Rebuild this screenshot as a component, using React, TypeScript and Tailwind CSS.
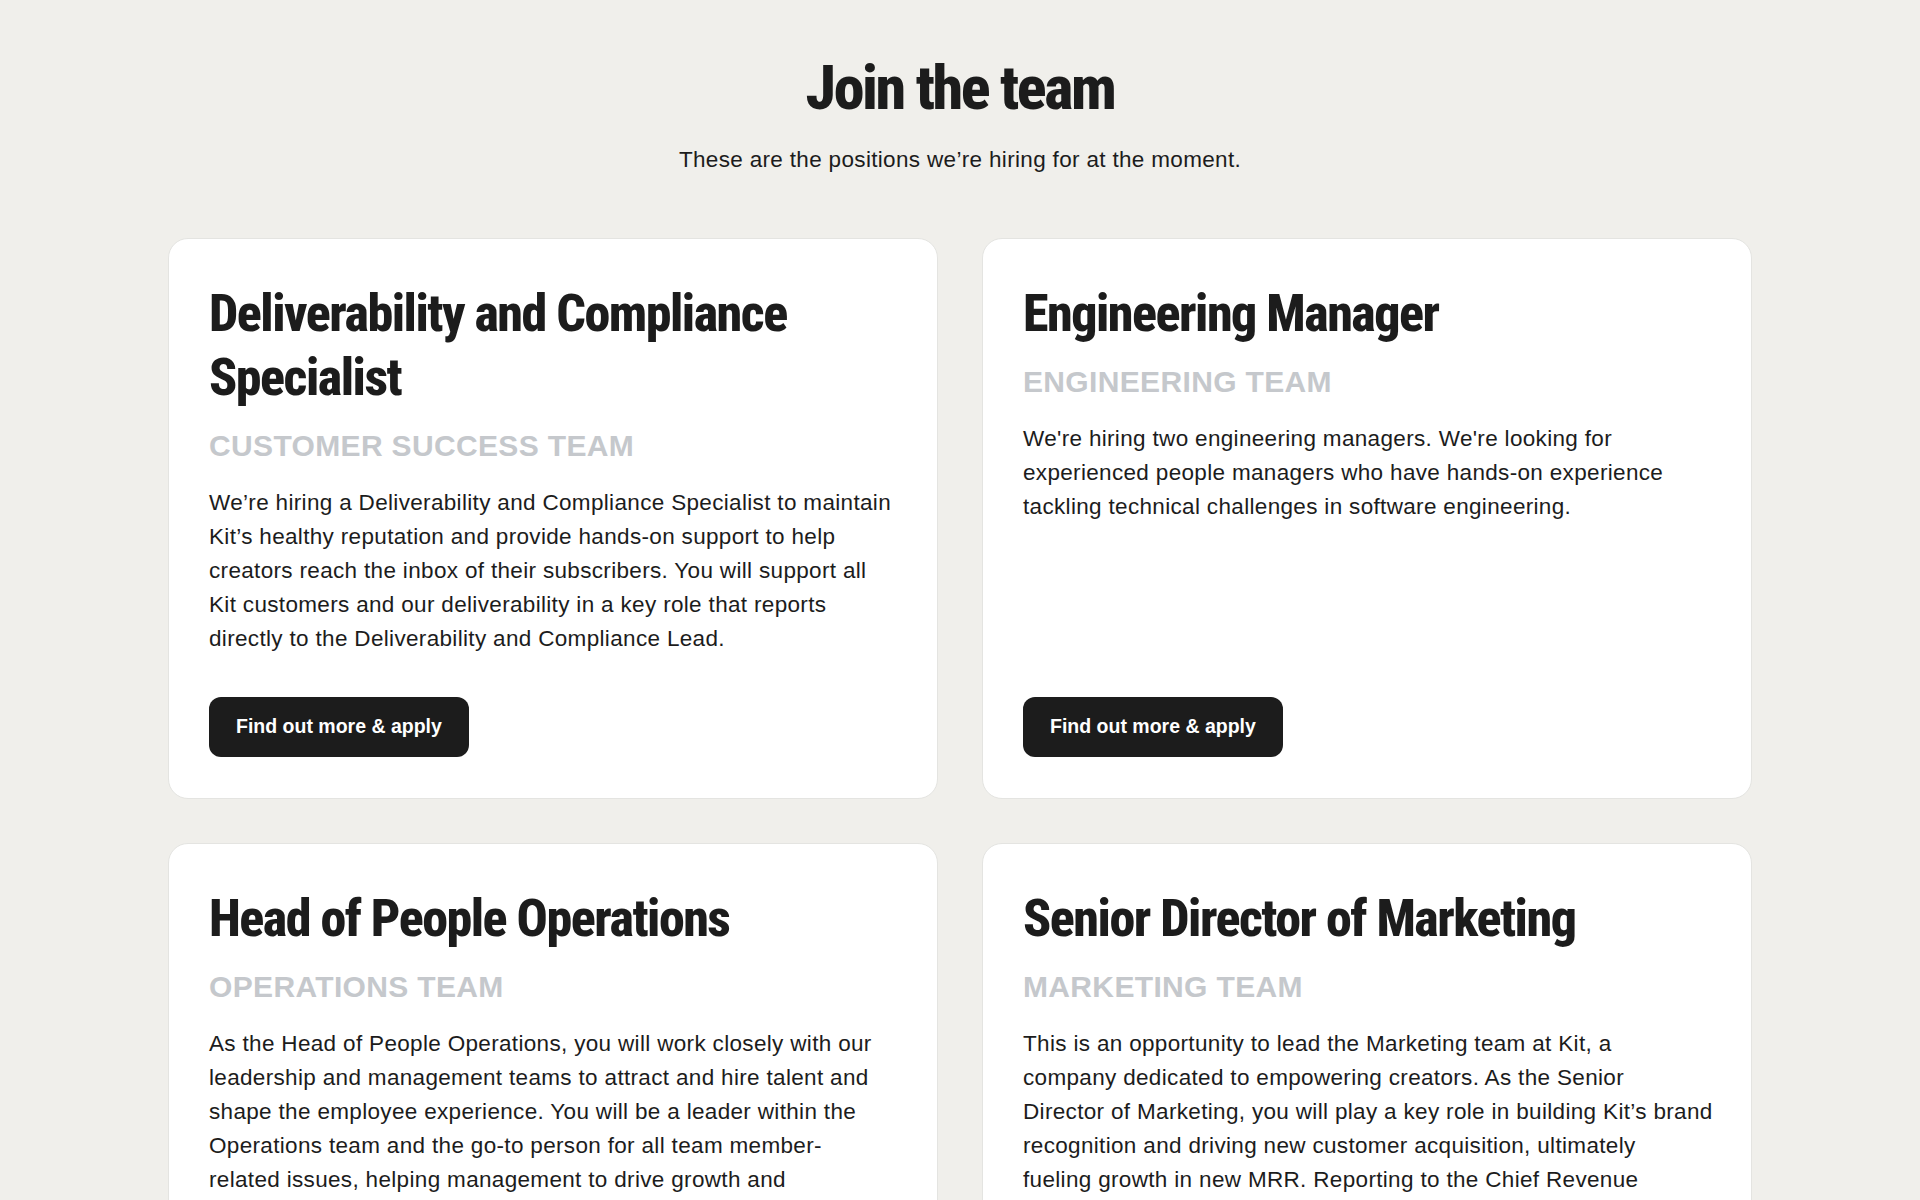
const jobs = [
  {
    title: 'Deliverability and Compliance Specialist',
    team: 'Customer Success Team',
    body: 'We’re hiring a Deliverability and Compliance Specialist to maintain Kit’s healthy reputation and provide hands-on support to help creators reach the inbox of their subscribers. You will support all Kit customers and our deliverability in a key role that reports directly to the Deliverability and Compliance Lead.',
  },
  {
    title: 'Engineering Manager',
    team: 'Engineering Team',
    body: "We're hiring two engineering managers. We're looking for experienced people managers who have hands-on experience tackling technical challenges in software engineering.",
  },
  {
    title: 'Head of People Operations',
    team: 'Operations Team',
    body: 'As the Head of People Operations, you will work closely with our leadership and management teams to attract and hire talent and shape the employee experience. You will be a leader within the Operations team and the go-to person for all team member-\nrelated issues, helping management to drive growth and\nsuccess across the whole company.',
  },
  {
    title: 'Senior Director of Marketing',
    team: 'Marketing Team',
    body: 'This is an opportunity to lead the Marketing team at Kit, a\ncompany dedicated to empowering creators. As the Senior\nDirector of Marketing, you will play a key role in building Kit’s brand\nrecognition and driving new customer acquisition, ultimately\nfueling growth in new MRR. Reporting to the Chief Revenue\nOfficer, you will shape our marketing strategy.',
  },
];

// condensed grotesque for headings: Roboto on its width axis
const display = "font-['Roboto',sans-serif] [font-stretch:75%] font-[800]";
const text = "font-['Liberation_Sans',sans-serif]";

function JobCard({ job }: { job: (typeof jobs)[number] }) {
  return (
    <div className="flex flex-col bg-white border border-[#e4e4e1] rounded-[20px] pl-[40px] pr-[37px] pt-[43px] pb-[41px]">
      <h2 className={`${display} text-[52px] leading-[64px] tracking-[-1.5px] text-[#1c1c1c]`}>
        {job.title}
      </h2>
      <p className={`mt-[16px] ${text} font-bold uppercase text-[30px] leading-[40px] tracking-[0.35px] text-[#c5c8cc]`}>
        {job.team}
      </p>
      <p className={`mt-[20px] ${text} whitespace-pre-line text-[22.5px] leading-[34px] tracking-[0.33px] text-[#1c1c1c]`}>
        {job.body}
      </p>
      <div className="mt-auto pt-[41px]">
        <button className={`h-[60px] px-[27px] rounded-[12px] bg-[#1c1c1c] text-white ${text} font-bold text-[19.5px]`}>
          Find out more &amp; apply
        </button>
      </div>
    </div>
  );
}

export default function App() {
  return (
    <div className="min-h-screen bg-[#f0efeb] pt-[54px] pb-[60px]">
      <div className="text-center">
        <h1 className={`${display} text-[62px] leading-[68px] tracking-[-2.4px] text-[#1c1c1c]`}>
          Join the team
        </h1>
        <p className={`mt-[22px] ${text} text-[22.5px] leading-[32px] tracking-[0.33px] text-[#1c1c1c]`}>
          These are the positions we’re hiring for at the moment.
        </p>
      </div>
      <div className="mx-auto mt-[62px] w-[1584px] grid grid-cols-2 gap-[44px]">
        {jobs.map((job) => (
          <JobCard key={job.title} job={job} />
        ))}
      </div>
    </div>
  );
}
